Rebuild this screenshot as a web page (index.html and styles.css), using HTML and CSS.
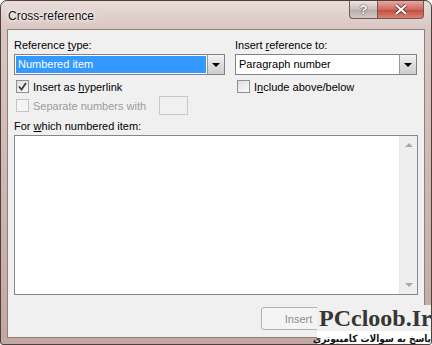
FILE: index.html
```html
<!DOCTYPE html>
<html lang="en">
<head>
    <meta charset="UTF-8">
    <title>Cross-reference</title>
    <link rel="stylesheet" href="styles.css">
</head>
<body>
    <div class="window">
        <div class="titlebar">
            <span class="title">Cross-reference</span>
            <div class="caption-btns">
                <span class="cap-btn help">?</span>
                <span class="cap-btn close">
                    <svg width="14" height="11" viewBox="0 0 14 11">
                        <path d="M2 1 L12 10 M12 1 L2 10" stroke="#5a2a26" stroke-width="3.6" fill="none"/>
                        <path d="M2 1 L12 10 M12 1 L2 10" stroke="#fff" stroke-width="2.2" fill="none"/>
                    </svg>
                </span>
            </div>
        </div>

        <div class="client">
            <div class="top-grid">
                <div class="col">
                    <div class="label">Reference <u>t</u>ype:</div>
                    <div class="select focused">
                        <span class="sel-text">Numbered item</span>
                        <span class="drop-btn"><span class="arrow"></span></span>
                    </div>
                    <div class="check-row">
                        <span class="checkbox checked">
                            <svg width="9" height="9" viewBox="0 0 9 9">
                                <path d="M1 4.5 L3.5 7.5 L8 1" stroke="#3c3c3c" stroke-width="1.8" fill="none"/>
                            </svg>
                        </span>
                        <span>Insert as <u>h</u>yperlink</span>
                    </div>
                    <div class="check-row disabled">
                        <span class="checkbox"></span>
                        <span>Separate numbers with</span>
                        <span class="small-input"></span>
                    </div>
                </div>
                <div class="col">
                    <div class="label">Insert <u>r</u>eference to:</div>
                    <div class="select">
                        <span class="sel-text">Paragraph number</span>
                        <span class="drop-btn"><span class="arrow"></span></span>
                    </div>
                    <div class="check-row">
                        <span class="checkbox"></span>
                        <span>I<u>n</u>clude above/below</span>
                    </div>
                </div>
            </div>

            <div class="label list-label">For <u>w</u>hich numbered item:</div>
            <div class="listbox">
                <div class="list-area"></div>
                <div class="scrollbar">
                    <span class="sb-arrow up"></span>
                    <span class="sb-arrow down"></span>
                </div>
            </div>

            <!-- the Cancel button sits under the watermark in the shot -->
            <div class="buttons">
                <button class="btn" disabled>Insert</button>
            </div>
        </div>

        <div class="watermark">
            <div class="wm-name">PCcloob.Ir</div>
            <div class="wm-sub" dir="rtl">پاسخ به سوالات کامپیوتری</div>
        </div>
    </div>
</body>
</html>
```

FILE: styles.css
```css
body {
    margin: 0;
    background: #ffffff;
    font-family: "Liberation Sans", Arial, sans-serif;
}

.window {
    position: relative;
    width: 430px;
    height: 343px;
    border: 1px solid #4e403d;
    border-radius: 7px 7px 3px 3px;
    background: linear-gradient(to bottom, #e8dcd9 0, #d9c6c2 28px, #c3a8a2 100%);
    display: flex;
    flex-direction: column;
    overflow: hidden;
}

.titlebar {
    height: 28px;
    display: flex;
    justify-content: space-between;
    align-items: flex-start;
    padding: 0 7px 0 7px;
}

.title {
    font-size: 12px;
    color: #111;
    margin-top: 8px;
    text-shadow: 0 0 6px #fff, 0 0 3px #fff;
}

.caption-btns {
    display: flex;
}

.cap-btn {
    height: 17px;
    display: flex;
    align-items: center;
    justify-content: center;
    border: 1px solid #6d5a56;
    border-top: none;
}

.help {
    width: 27px;
    border-right: none;
    border-radius: 0 0 0 4px;
    background: linear-gradient(to bottom, #ece4e2, #c9bcb9 50%, #b8a9a6 51%, #d4c8c5);
    color: #fff;
    font-weight: bold;
    font-size: 13px;
    text-shadow: 0 0 2px #555, 0 0 1px #333;
}

.close {
    width: 45px;
    border-radius: 0 0 4px 0;
    background: linear-gradient(to bottom, #e8a89f, #cf6a5e 50%, #c04b3d 51%, #d88375);
}

.client {
    flex: 1;
    margin: 0 6px 6px 6px;
    border: 1px solid #8f7f7b;
    background: #f0f0f0;
    padding: 6px 6px 0 6px;
    font-size: 11px;
    color: #000;
    display: flex;
    flex-direction: column;
}

.top-grid {
    display: grid;
    grid-template-columns: 211px 182px;
    column-gap: 10px;
}

.col {
    display: flex;
    flex-direction: column;
}

.label {
    height: 15px;
    line-height: 15px;
    margin-top: 2px;
    margin-bottom: 1px;
}

.list-label {
    margin-top: 4px;
}

.select {
    height: 19px;
    border: 1px solid #828282;
    background: #fff;
    display: flex;
    align-items: stretch;
}

.sel-text {
    flex: 1;
    margin: 1px;
    padding-left: 2px;
    line-height: 17px;
    white-space: nowrap;
}

.select.focused .sel-text {
    background: #3399ff;
    color: #fff;
}

.drop-btn {
    width: 16px;
    border-left: 1px solid #9a9a9a;
    background: linear-gradient(to bottom, #f4f4f4, #dcdcdc 50%, #cfcfcf);
    display: flex;
    align-items: center;
    justify-content: center;
}

.arrow {
    width: 0;
    height: 0;
    border-left: 4px solid transparent;
    border-right: 4px solid transparent;
    border-top: 4px solid #000;
}

.check-row {
    height: 19px;
    margin-top: 2px;
    display: flex;
    align-items: center;
    gap: 4px;
    padding-left: 2px;
    white-space: nowrap;
}

.check-row.disabled {
    margin-top: 0;
    color: #9c9c9c;
}

.checkbox {
    width: 11px;
    height: 11px;
    border: 1px solid #8e8f8f;
    background: linear-gradient(135deg, #dedede, #fbfbfb);
    display: flex;
    align-items: center;
    justify-content: center;
}

.check-row.disabled .checkbox {
    border-color: #c4c4c4;
    background: #f4f4f4;
}

.small-input {
    width: 27px;
    height: 17px;
    margin-left: 9px;
    border: 1px solid #c9c9c9;
    background: #f0f0f0;
}

.listbox {
    height: 158px;
    border: 1px solid #828790;
    background: #fff;
    display: flex;
}

.list-area {
    flex: 1;
}

.scrollbar {
    width: 17px;
    background: #eeeeee;
    border-left: 1px solid #e6e6e6;
    display: flex;
    flex-direction: column;
    justify-content: space-between;
    align-items: center;
    padding: 7px 0 7px 0;
}

.sb-arrow {
    width: 0;
    height: 0;
    border-left: 4px solid transparent;
    border-right: 4px solid transparent;
}

.sb-arrow.up {
    border-bottom: 4px solid #a8a8a8;
}

.sb-arrow.down {
    border-top: 4px solid #a8a8a8;
}

.buttons {
    display: flex;
    justify-content: flex-end;
    margin-top: 12px;
    padding-right: 82px;
}

.btn {
    width: 75px;
    height: 23px;
    border: 1px solid #adb2b5;
    border-radius: 3px;
    background: #f4f4f4;
    font-family: "Liberation Sans", Arial, sans-serif;
    font-size: 11px;
    color: #000;
    padding: 0;
    flex-shrink: 0;
}

.btn:disabled {
    color: #8d8d8d;
}

.watermark {
    position: absolute;
    left: 316px;
    top: 304px;
    width: 116px;
    display: flex;
    flex-direction: column;
}

.wm-name {
    font-family: "Liberation Serif", "Times New Roman", serif;
    font-weight: bold;
    font-size: 24px;
    line-height: 26px;
    color: #363636;
    background: #f0f0f0;
    padding-left: 2px;
}

.wm-sub {
    font-family: "DejaVu Sans Condensed", "DejaVu Sans", sans-serif;
    font-weight: bold;
    font-size: 10px;
    line-height: 15px;
    white-space: nowrap;
    color: #111;
    background: #fff;
    text-align: right;
    padding-right: 2px;
}
```
